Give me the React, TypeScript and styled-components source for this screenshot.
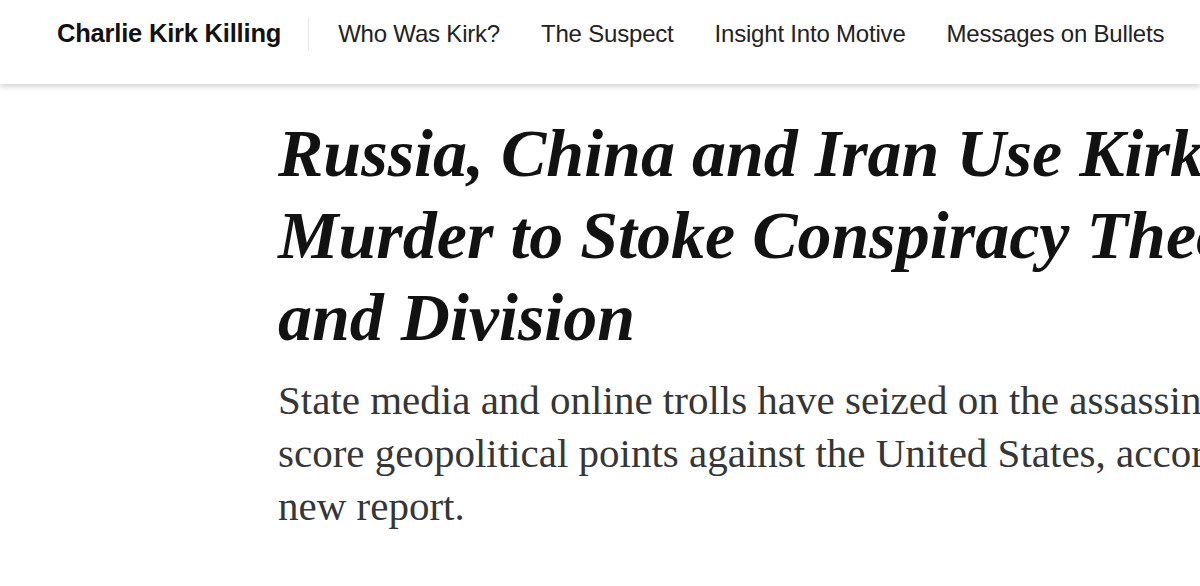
import React from 'react';
import styled, {createGlobalStyle} from 'styled-components';

const GlobalStyle = createGlobalStyle`
  html, body {
    margin: 0;
    padding: 0;
    background: #fff;
    overflow: hidden;
  }
`

const navItems = ['Who Was Kirk?', 'The Suspect', 'Insight Into Motive', 'Messages on Bullets']

const App = () => {
    return <Page>
        <GlobalStyle/>
        <NavBar>
            <NavTitle>Charlie Kirk Killing</NavTitle>
            <NavDivider/>
            <NavList>
                {navItems.map(item => <NavLink key={item}>{item}</NavLink>)}
            </NavList>
        </NavBar>
        <Article>
            <Headline>
                Russia, China and Iran Use Kirk’s<br/>
                Murder to Stoke Conspiracy Theories<br/>
                and Division
            </Headline>
            <Summary>
                State media and online trolls have seized on the assassination of Charlie Kirk to<br/>
                score geopolitical points against the United States, according to a<br/>
                new report.
            </Summary>
        </Article>
    </Page>
};
export default App;

const Page = styled.div`
  width: 1200px;
  height: 586px;
  overflow: hidden;
  background: #fff;
`

const NavBar = styled.nav`
  height: 84px;
  display: flex;
  align-items: center;
  padding-left: 57px;
  padding-bottom: 17px;
  box-sizing: border-box;
  box-shadow: 0 3px 5px rgba(0, 0, 0, 0.16);
  font-family: "Liberation Sans", Arial, sans-serif;
  white-space: nowrap;
  position: relative;
`

const NavTitle = styled.span`
  font-size: 25.5px;
  font-weight: 700;
  color: #121212;
  letter-spacing: -0.2px;
`

const NavDivider = styled.span`
  width: 1px;
  height: 32px;
  background: #e6e6e6;
  margin: 0 29px 0 27px;
`

const NavList = styled.div`
  display: flex;
  gap: 41px;
`

const NavLink = styled.span`
  font-size: 24px;
  color: #222;
  letter-spacing: -0.2px;
`

const Article = styled.main`
  padding-left: 278px;
  padding-top: 28px;
  white-space: nowrap;
`

const Headline = styled.h1`
  margin: 0;
  font-family: "Liberation Serif", "Times New Roman", serif;
  font-style: italic;
  font-weight: 700;
  font-size: 68px;
  line-height: 82px;
  color: #121212;
`

const Summary = styled.p`
  margin: 16px 0 0;
  font-family: "Liberation Serif", "Times New Roman", serif;
  font-size: 41px;
  line-height: 53px;
  color: #363636;
`
